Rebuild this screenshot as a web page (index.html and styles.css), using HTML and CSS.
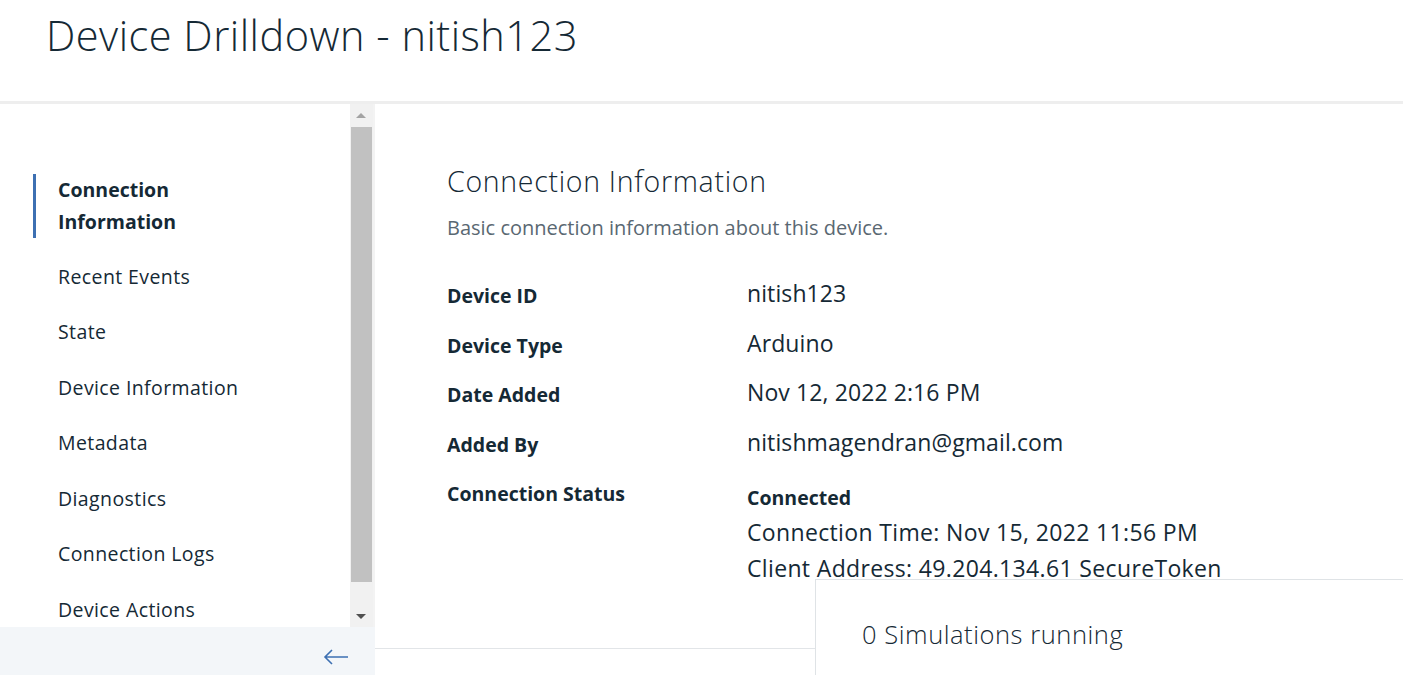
FILE: index.html
```html
<!DOCTYPE html>
<html lang="en">
<head>
<meta charset="utf-8">
<title>Device Drilldown - nitish123</title>
<link rel="stylesheet" href="styles.css">
</head>
<body>
<header class="page-header">
  <h1 class="page-title">Device Drilldown - nitish123</h1>
</header>
<div class="layout">
  <aside class="sidebar">
    <div class="sidebar-scroll">
      <nav class="side-nav">
        <a class="nav-item active">Connection<br>Information</a>
        <a class="nav-item">Recent Events</a>
        <a class="nav-item">State</a>
        <a class="nav-item">Device Information</a>
        <a class="nav-item">Metadata</a>
        <a class="nav-item">Diagnostics</a>
        <a class="nav-item">Connection Logs</a>
        <a class="nav-item">Device Actions</a>
      </nav>
      <div class="scrollbar">
        <span class="sb-arrow sb-up"></span>
        <div class="sb-track"><div class="sb-thumb"></div></div>
        <span class="sb-arrow sb-down"></span>
      </div>
    </div>
    <div class="collapse-bar">
      <svg class="collapse-icon" width="26" height="16" viewBox="0 0 26 16" aria-hidden="true">
        <path d="M25 8H2M9 1L2 8l7 7" fill="none" stroke="#3d70b2" stroke-width="1.6"/>
      </svg>
    </div>
  </aside>
  <main class="content">
    <section class="card">
      <h2 class="card-title">Connection Information</h2>
      <p class="card-desc">Basic connection information about this device.</p>
      <dl class="info-grid">
        <dt>Device ID</dt><dd>nitish123</dd>
        <dt>Device Type</dt><dd>Arduino</dd>
        <dt>Date Added</dt><dd>Nov 12, 2022 2:16 PM</dd>
        <dt>Added By</dt><dd>nitishmagendran@gmail.com</dd>
        <dt>Connection Status</dt>
        <dd class="status">
          <strong class="status-main">Connected</strong>
          <span class="status-line">Connection Time: Nov 15, 2022 11:56 PM</span>
          <span class="status-line">Client Address: 49.204.134.61 SecureToken</span>
        </dd>
      </dl>
    </section>
  </main>
</div>
<div class="sim-panel">0 Simulations running</div>
</body>
</html>
```
FILE: styles.css
```css
* { box-sizing: border-box; }
html, body { margin: 0; padding: 0; }
body {
  font-family: "Open Sans", "Noto Sans", sans-serif;
  color: #152935;
  background: #ffffff;
  width: 1403px;
  height: 675px;
  overflow: hidden;
  position: relative;
}

.page-header {
  height: 104px;
  border-bottom: 3px solid #eeeeee;
  padding: 9px 0 0 46px;
}
.page-title {
  margin: 0;
  font-size: 41.5px;
  font-weight: 300;
  line-height: 52px;
  letter-spacing: 0.5px;
}

.layout {
  display: flex;
  height: 571px;
}

.sidebar {
  width: 375px;
  flex: none;
  display: flex;
  flex-direction: column;
}
.sidebar-scroll {
  height: 523px;
  display: flex;
  border-right: 2px solid #f3f3f3;
}
.side-nav {
  flex: 1;
  display: flex;
  flex-direction: column;
  gap: 24.5px;
  padding: 70px 0 0 33px;
}
.nav-item {
  display: block;
  font-size: 19.5px;
  line-height: 31px;
  letter-spacing: 0.4px;
  padding-left: 22px;
  border-left: 3px solid transparent;
  color: #152935;
}
.nav-item.active {
  font-weight: 700;
  letter-spacing: 0;
  border-left-color: #3d70b2;
  line-height: 32px;
  margin-bottom: -2px;
}

.scrollbar {
  width: 23px;
  flex: none;
  background: #f1f1f1;
  display: flex;
  flex-direction: column;
  align-items: center;
}
.sb-arrow {
  flex: none;
  height: 23px;
  width: 23px;
  position: relative;
}
.sb-arrow::after {
  content: "";
  position: absolute;
  left: 6px;
  width: 0;
  height: 0;
  border-left: 5px solid transparent;
  border-right: 5px solid transparent;
}
.sb-up::after { top: 9px; border-bottom: 5px solid #a3a3a3; }
.sb-down::after { top: 10px; border-top: 5px solid #505050; }
.sb-track {
  flex: 1;
  width: 100%;
  padding: 0 1px;
}
.sb-thumb {
  height: 455px;
  background: #c1c1c1;
}

.collapse-bar {
  height: 48px;
  background: #f3f6f9;
  display: flex;
  align-items: flex-start;
  justify-content: flex-end;
  padding: 22px 26px 0 0;
}

.content {
  flex: 1;
  min-width: 0;
}
.card {
  height: 545px;
  border-bottom: 1px solid #e2e5e8;
  padding: 59px 0 0 72px;
}
.card-title {
  margin: 0;
  font-size: 28.5px;
  font-weight: 300;
  line-height: 36px;
  letter-spacing: 0.7px;
}
.card-desc {
  margin: 16px 0 0;
  font-size: 20px;
  line-height: 26px;
  color: #5a6872;
}
.info-grid {
  margin: 37px 0 0;
  display: grid;
  grid-template-columns: 300px 1fr;
  grid-auto-rows: minmax(49.5px, auto);
}
.info-grid dt {
  font-weight: 700;
  font-size: 19.5px;
  line-height: 30px;
  padding-top: 3px;
}
.info-grid dd {
  margin: 0;
  font-size: 23px;
  line-height: 30px;
  letter-spacing: 0.1px;
}
.status {
  display: flex;
  flex-direction: column;
  padding-top: 7px;
}
.status-main {
  font-size: 19.5px;
  font-weight: 700;
  line-height: 30px;
  letter-spacing: 0;
  margin-bottom: 1px;
}
.status-line {
  line-height: 36px;
  letter-spacing: 0.35px;
}

.sim-panel {
  position: absolute;
  left: 815px;
  top: 579px;
  width: 600px;
  height: 110px;
  background: #ffffff;
  border: 1px solid #dfe3e6;
  padding: 37px 0 0 46px;
  font-size: 25.5px;
  font-weight: 300;
  line-height: 34px;
  letter-spacing: 0.55px;
  color: #152935;
}
```
